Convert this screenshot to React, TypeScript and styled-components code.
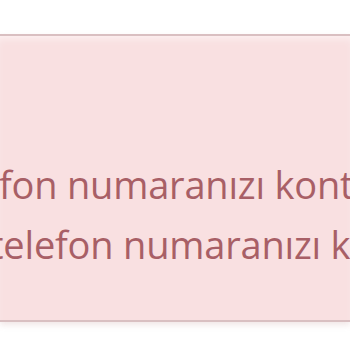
import React from "react";
import styled, { createGlobalStyle } from "styled-components";

const Global = createGlobalStyle`
  html, body { margin: 0; padding: 0; background: #ffffff; }
  body { width: 350px; height: 350px; overflow: hidden; }
`;

const Page = styled.div`
  padding-top: 34px;
  width: 350px;
`;

const Alert = styled.div`
  background: #f9e0e1;
  border-top: 2px solid #d9bfc1;
  border-bottom: 2px solid #d9bfc1;
  box-shadow: 0 3px 6px rgba(190, 140, 140, 0.22), inset 0 6px 8px -4px rgba(255, 255, 255, 0.6);
  padding: 118px 0 46px 0;
  overflow: hidden;
`;

const Line = styled.div<{ $indent: number }>`
  font-family: "Open Sans", "Noto Sans", sans-serif;
  font-size: 38px;
  line-height: 60px;
  letter-spacing: -0.2px;
  color: #a85f66;
  white-space: nowrap;
  text-indent: ${(p) => p.$indent}px;
`;

export default function App() {
  return (
    <>
      <Global />
      <Page>
        <Alert>
          <Line $indent={-1}>fon numaranızı kontrol ediniz.</Line>
          <Line $indent={-10}>telefon numaranızı kontrol ediniz.</Line>
        </Alert>
      </Page>
    </>
  );
}
